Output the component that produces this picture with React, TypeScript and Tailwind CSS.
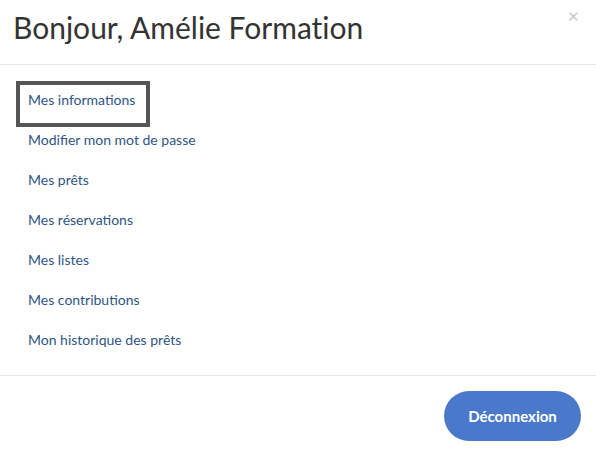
const links = [
  "Mes informations",
  "Modifier mon mot de passe",
  "Mes prêts",
  "Mes réservations",
  "Mes listes",
  "Mes contributions",
  "Mon historique des prêts",
];

export default function App() {
  return (
    <div
      className="w-[596px] h-[456px] bg-white flex flex-col"
      style={{ fontFamily: "Lato, 'Open Sans', sans-serif" }}
    >
      <div className="relative h-[65px] border-b border-[#e5e5e5] px-[13px] pt-[12px]">
        <h4 className="text-[30px] leading-none text-[#333] [font-variant-ligatures:none]">
          Bonjour, Amélie Formation
        </h4>
        <button className="absolute right-[17px] top-[5px] text-[20px] leading-none text-[#c8c8c8]">
          ×
        </button>
      </div>
      <div className="h-[311px] border-b border-[#e5e5e5] px-[28px] py-[15px] flex flex-col">
        {links.map((label, i) => (
          <div key={label} className="h-10 flex items-center">
            <a
              href="#"
              className="relative text-[14px] leading-5 text-[#2e5585]"
            >
              {label}
              {i === 0 && (
                <span className="absolute left-[-12px] right-[-15px] top-[-9px] bottom-[-17px] border-4 border-[#555]" />
              )}
            </a>
          </div>
        ))}
      </div>
      <div className="flex-1 flex justify-end items-start pt-[15px] pr-[15px]">
        <button className="h-[50px] w-[137px] rounded-full bg-[#4a79cb] text-white text-[15px] font-bold">
          Déconnexion
        </button>
      </div>
    </div>
  );
}
